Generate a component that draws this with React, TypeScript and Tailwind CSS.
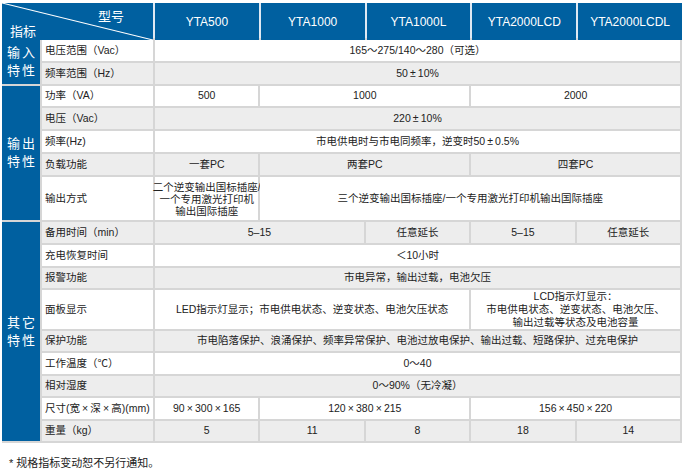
import React from "react";

const W = "bg-white";
const G = "bg-[#ededed]";

type C = { t: React.ReactNode; c: string };
type R = { label: string; bg: string; cells: C[] };

const pm = "\u2009±\u2009";
const x = "\u2009×\u2009";

const rows: R[] = [
  { label: "电压范围（Vac）", bg: W, cells: [{ t: "165～275/140～280（可选）", c: "col-span-5" }] },
  { label: "频率范围（Hz）", bg: G, cells: [{ t: `50${pm}10%`, c: "col-span-5" }] },
  {
    label: "功率（VA）",
    bg: W,
    cells: [
      { t: "500", c: "col-span-1" },
      { t: "1000", c: "col-span-2" },
      { t: "2000", c: "col-span-2" },
    ],
  },
  { label: "电压（Vac）", bg: G, cells: [{ t: `220${pm}10%`, c: "col-span-5" }] },
  { label: "频率(Hz)", bg: W, cells: [{ t: `市电供电时与市电同频率，逆变时50${pm}0.5%`, c: "col-span-5" }] },
  {
    label: "负载功能",
    bg: G,
    cells: [
      { t: "一套PC", c: "col-span-1" },
      { t: "两套PC", c: "col-span-2" },
      { t: "四套PC", c: "col-span-2" },
    ],
  },
  {
    label: "输出方式",
    bg: W,
    cells: [
      {
        t: (
          <>
            二个逆变输出国标插座/
            <br />
            一个专用激光打印机
            <br />
            输出国际插座
          </>
        ),
        c: "col-span-1 leading-[12px]",
      },
      { t: "三个逆变输出国标插座/一个专用激光打印机输出国际插座", c: "col-span-4" },
    ],
  },
  {
    label: "备用时间（min）",
    bg: G,
    cells: [
      { t: "5–15", c: "col-span-2" },
      { t: "任意延长", c: "col-span-1" },
      { t: "5–15", c: "col-span-1" },
      { t: "任意延长", c: "col-span-1" },
    ],
  },
  { label: "充电恢复时间", bg: W, cells: [{ t: "＜10小时", c: "col-span-5" }] },
  { label: "报警功能", bg: G, cells: [{ t: "市电异常，输出过载，电池欠压", c: "col-span-5" }] },
  {
    label: "面板显示",
    bg: W,
    cells: [
      { t: "LED指示灯显示；市电供电状态、逆变状态、电池欠压状态", c: "col-span-3" },
      {
        t: (
          <>
            LCD指示灯显示：
            <br />
            市电供电状态、逆变状态、电池欠压、
            <br />
            输出过载等状态及电池容量
          </>
        ),
        c: "col-span-2 leading-[13px]",
      },
    ],
  },
  {
    label: "保护功能",
    bg: G,
    cells: [
      {
        t: "市电陷落保护、浪涌保护、频率异常保护、电池过放电保护、输出过载、短路保护、过充电保护",
        c: "col-span-5",
      },
    ],
  },
  { label: "工作温度（℃）", bg: W, cells: [{ t: "0～40", c: "col-span-5" }] },
  { label: "相对湿度", bg: G, cells: [{ t: "0～90%（无冷凝）", c: "col-span-5" }] },
  {
    label: `尺寸(宽${x}深${x}高)(mm)`,
    bg: W,
    cells: [
      { t: `90${x}300${x}165`, c: "col-span-1" },
      { t: `120${x}380${x}215`, c: "col-span-2" },
      { t: `156${x}450${x}220`, c: "col-span-2" },
    ],
  },
  {
    label: "重量（kg）",
    bg: G,
    cells: [
      { t: "5", c: "col-span-1" },
      { t: "11", c: "col-span-1" },
      { t: "8", c: "col-span-1" },
      { t: "18", c: "col-span-1" },
      { t: "14", c: "col-span-1" },
    ],
  },
];

const font = { fontFamily: '"Liberation Sans", "Noto Sans CJK SC", sans-serif' };

function Cat({ a, b, c }: { a: string; b: string; c: string }) {
  return (
    <div
      className={`${c} col-start-1 bg-[#0060a0] text-white text-[13px] leading-[18px] tracking-[2px] flex flex-col items-center justify-center pl-[2px]`}
    >
      <div>{a}</div>
      <div>{b}</div>
    </div>
  );
}

export default function App() {
  const models = ["YTA500", "YTA1000", "YTA1000L", "YTA2000LCD", "YTA2000LCDL"];
  return (
    <div className="w-[686px] h-[473px] bg-white text-[#222]" style={font}>
      <div className="pt-[3px] pl-[2px]">
        <div className="w-[680px] bg-[#d6d6d6] flex flex-col gap-[2px]">
          <div className="grid grid-cols-[38px_111px_repeat(5,minmax(0,1fr))] h-[35px] gap-x-[2px] bg-[#dfe9f3]">
            <div className="col-span-2 bg-[#0060a0] text-white relative flex flex-col justify-between text-[13px] leading-[15px]">
              <svg className="absolute inset-0 w-full h-full" viewBox="0 0 151 35" preserveAspectRatio="none">
                <line x1="0" y1="0" x2="151" y2="35" stroke="#ffffff" strokeWidth="1" />
              </svg>
              <div className="self-end pr-[29px] pt-[6px]">型号</div>
              <div className="pl-[8px] pb-[1px]">指标</div>
            </div>
            {models.map((m) => (
              <div key={m} className="bg-[#0060a0] text-white text-[12px] flex items-center justify-center">
                {m}
              </div>
            ))}
          </div>
          <div className="grid grid-cols-[38px_111px_repeat(5,minmax(0,1fr))] grid-rows-[21px_21px_20px_21px_21px_21px_43px_21px_21px_20px_39px_20px_21px_20px_21px_20px] gap-[2px] pr-[2px] pb-[2px] text-[10.5px]">
            <Cat a="输入" b="特性" c="row-start-1 row-span-2" />
            <Cat a="输出" b="特性" c="row-start-3 row-span-5" />
            <Cat a="其它" b="特性" c="row-start-8 row-span-9" />
            {rows.map((r, i) => (
              <React.Fragment key={i}>
                <div className={`${r.bg} col-start-2 flex items-center pl-[3px] whitespace-nowrap`}>{r.label}</div>
                {r.cells.map((c, j) => (
                  <div
                    key={j}
                    className={`${r.bg} ${c.c} flex items-center justify-center text-center whitespace-nowrap`}
                  >
                    <div>{c.t}</div>
                  </div>
                ))}
              </React.Fragment>
            ))}
          </div>
        </div>
        <div className="mt-[13px] pl-[7px] text-[11px] leading-[14px] text-[#222]">* 规格指标变动恕不另行通知。</div>
      </div>
    </div>
  );
}
